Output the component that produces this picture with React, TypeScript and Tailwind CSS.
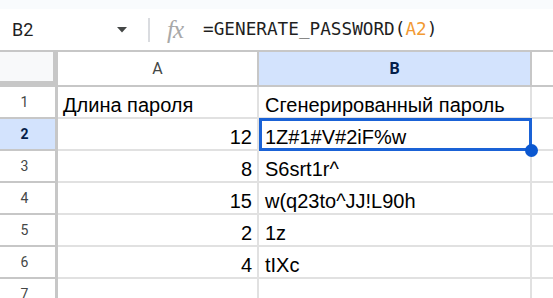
import React from "react";

const rows: [string, string, string][] = [
  ["1", "Длина пароля", "Сгенерированный пароль"],
  ["2", "12", "1Z#1#V#2iF%w"],
  ["3", "8", "S6srt1r^"],
  ["4", "15", "w(q23to^JJ!L90h"],
  ["5", "2", "1z"],
  ["6", "4", "tIXc"],
  ["7", "", ""],
];

export default function App() {
  return (
    <div className="w-[553px] h-[298px] overflow-hidden bg-white font-['Liberation_Sans',Arial,sans-serif] text-black">
      <div className="h-[9px] bg-[#f9fbfd]" />
      {/* formula bar */}
      <div className="h-[43px] flex items-center border-b-2 border-[#c7c7c7] bg-white">
        <div className="w-[148px] pl-[12px] pr-[21px] flex items-center justify-between">
          <span className="font-['Roboto',sans-serif] text-[18px] text-[#1f1f1f]">B2</span>
          <svg width="10" height="6" viewBox="0 0 10 6" className="mt-[1px]">
            <path d="M0 0h10L5 5.5z" fill="#444746" />
          </svg>
        </div>
        <div className="w-[2px] h-[24px] bg-[#dadce0] mt-[1px]" />
        <span className="ml-[17px] mr-[20px] font-['Liberation_Serif',serif] italic text-[25px] leading-none text-[#a8a8a8] tracking-[-1px]">
          fx
        </span>
        <span className="font-['DejaVu_Sans_Mono',monospace] text-[17.7px] text-[#1f1f1f]">
          =GENERATE_PASSWORD(<span className="text-[#f29a33]">A2</span>)
        </span>
      </div>
      {/* column headers */}
      <div className="grid grid-cols-[58px_201px_273px_1fr] h-[35px]">
        <div className="bg-[#f8f9fa] border-r-[5px] border-b-[6px] border-[#c7c7c7]" />
        <div className="flex items-center justify-center border-r-2 border-b-2 border-[#c7c7c7] bg-white text-[16px] text-[#444746] font-['Roboto',sans-serif]">
          A
        </div>
        <div className="flex items-center justify-center border-r-2 border-b-2 border-[#c7c7c7] bg-[#d3e3fd] text-[16px] font-bold text-[#041e49] font-['Roboto',sans-serif]">
          B
        </div>
        <div className="border-b-2 border-[#c7c7c7]" />
      </div>
      {/* rows */}
      {rows.map(([n, a, b]) => {
        const sel = n === "2";
        return (
          <div key={n} className="grid grid-cols-[58px_201px_273px_1fr] h-[32px]">
            <div
              className={
                sel
                  ? "flex items-center justify-center pr-[6px] border-r-[3px] border-b-2 border-[#c7c7c7] bg-[#d3e3fd] text-[14px] font-bold text-[#041e49] font-['Roboto',sans-serif]"
                  : "flex items-center justify-center pr-[6px] border-r-[3px] border-b-2 border-[#c7c7c7] bg-white text-[14px] text-[#444746] font-['Roboto',sans-serif]"
              }
            >
              {n}
            </div>
            <div
              className={
                n === "1"
                  ? "flex items-end justify-start px-[5px] border-r-2 border-b-2 border-[#e1e1e1] text-[20px] leading-[23px] whitespace-nowrap"
                  : "flex items-end justify-end px-[5px] border-r-2 border-b-2 border-[#e1e1e1] text-[20px] leading-[23px] whitespace-nowrap"
              }
            >
              {a}
            </div>
            <div className="relative flex items-end pl-[6px] border-r-2 border-b-2 border-[#e1e1e1] text-[20px] leading-[23px] whitespace-nowrap">
              {b}
              {sel && (
                <div className="absolute -top-[1px] left-0 -right-[2px] -bottom-[2px] border-[3px] border-[#1a62d6] z-10">
                  <div className="absolute -right-[9px] -bottom-[9px] w-[13px] h-[13px] rounded-full bg-[#0b57d0]" />
                </div>
              )}
            </div>
            <div className="border-b-2 border-[#e1e1e1]" />
          </div>
        );
      })}
    </div>
  );
}
